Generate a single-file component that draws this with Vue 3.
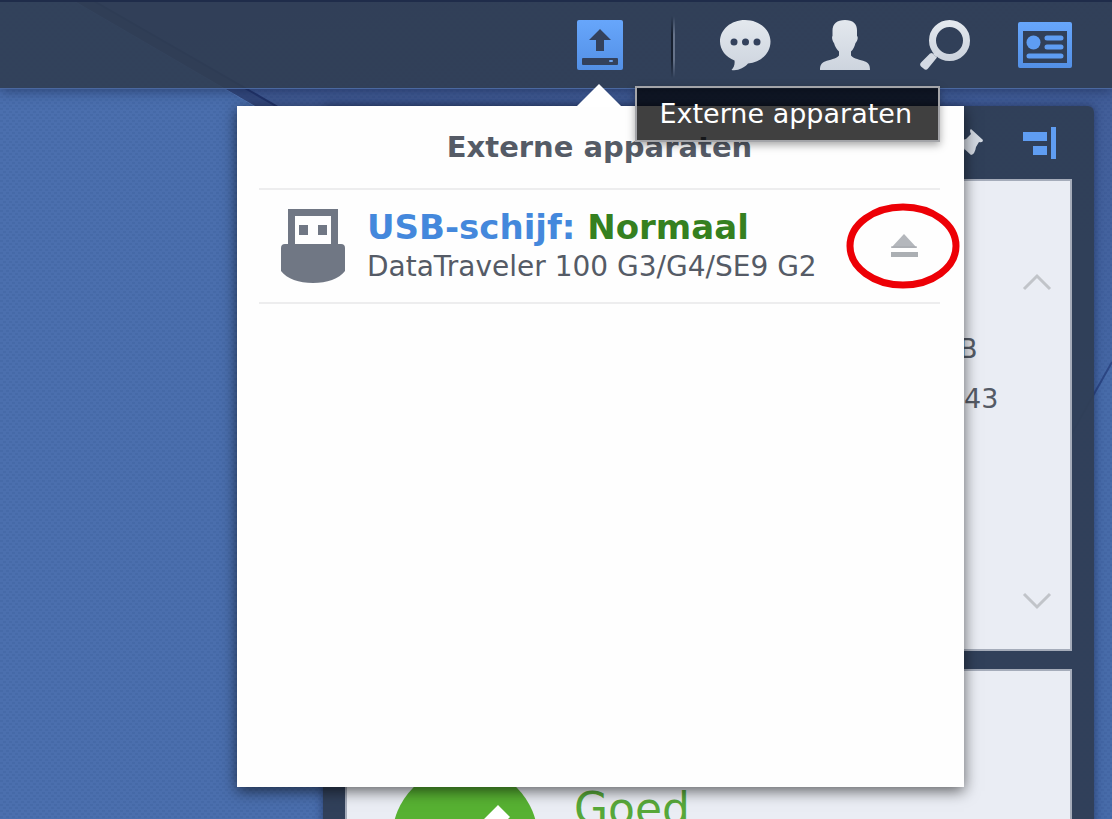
<script setup>
const device = {
  label: 'USB-schijf:',
  status: 'Normaal',
  model: 'DataTraveler 100 G3/G4/SE9 G2',
}
</script>

<template>
  <div class="desktop">
    <svg class="wallpaper" viewBox="0 0 1112 819" preserveAspectRatio="xMidYMid slice" aria-hidden="true">
      <defs>
        <linearGradient id="sky" x1="0" y1="0" x2="1" y2="0">
          <stop offset="0" stop-color="#4b6fae" />
          <stop offset="1" stop-color="#476ba9" />
        </linearGradient>
        <linearGradient id="facet" x1="0" y1="0" x2="0.3" y2="1">
          <stop offset="0" stop-color="#40578f" />
          <stop offset="1" stop-color="#4466a4" />
        </linearGradient>
        <pattern id="weave" width="6" height="6" patternUnits="userSpaceOnUse">
          <path d="M0 0h3v2H0zM3 3h3v2H3z" fill="#203c78" fill-opacity=".1" />
        </pattern>
      </defs>
      <rect width="1112" height="819" fill="url(#sky)" />
      <path d="M90 0H1112V362L1040 490L272 106Z" fill="url(#facet)" />
      <path d="M72 0H92L290 114L268 114Z" fill="#34497e" />
      <path d="M92 0L290 114" stroke="#22346b" stroke-width="2" />
      <path d="M72 0L268 114" stroke="#5679b8" stroke-width="1" />
      <path d="M1112 362L1040 490" stroke="#2c4684" stroke-width="2" />
      <rect width="1112" height="819" fill="url(#weave)" />
    </svg>

    <header class="taskbar">
      <button class="task" type="button" aria-label="Externe apparaten" aria-describedby="tip">
        <svg width="46" height="52" viewBox="0 0 46 52">
          <defs>
            <linearGradient id="blue" x1="0" y1="0" x2="0" y2="1">
              <stop offset="0" stop-color="#67a6fb" />
              <stop offset="1" stop-color="#5390e6" />
            </linearGradient>
          </defs>
          <rect x="0" y="1" width="46" height="50" rx="2" fill="url(#blue)" />
          <path d="M23 10L34 21H27V32H19V21H12Z" fill="#33415c" />
          <rect x="5" y="39" width="36" height="7" rx="1" fill="#33415c" />
          <rect x="32" y="41" width="4" height="2" rx="1" fill="#6aa2f0" />
        </svg>
      </button>
      <span class="divider"></span>
      <button class="task" type="button" aria-label="Chat">
        <svg width="52" height="52" viewBox="0 0 52 52">
          <defs>
            <linearGradient id="silver" x1="0" y1="0" x2="0" y2="1">
              <stop offset="0" stop-color="#e3e8ee" />
              <stop offset="1" stop-color="#cdd4de" />
            </linearGradient>
          </defs>
          <path d="M26 1C12 1 1 10.500 1 22.500C1 31 7 38 15.500 41.500C16 45 15 48.500 12.500 51C19 52 25 49 29 44.500C42 43.500 51.500 34 51.500 22.500C51.500 10.500 40 1 26 1Z" fill="url(#silver)" />
          <circle cx="15" cy="23" r="3.500" fill="#33415c" />
          <circle cx="26.500" cy="23" r="3.500" fill="#33415c" />
          <circle cx="38" cy="23" r="3.500" fill="#33415c" />
        </svg>
      </button>
      <button class="task" type="button" aria-label="Gebruiker">
        <svg width="50" height="52" viewBox="0 0 50 52">
          <path d="M25 1C17 1 12.500 5 12.500 11.500V17C11.500 18 12.500 22 14 24C15 28 17 30.500 19 32.500V36.500C16 40 10 40.500 5 42.500C1.500 44 0 46 0 51H50C50 46 48.500 44 45 42.500C40 40.500 34 40 31 36.500V32.500C33 30.500 34.500 28 35.500 24C37.500 22 38.500 18 37 17V11.500C37 5 33 1 25 1Z" fill="url(#silver)" />
        </svg>
      </button>
      <button class="task" type="button" aria-label="Zoeken">
        <svg width="50" height="52" viewBox="0 0 50 52">
          <circle cx="29.500" cy="21.500" r="17" fill="none" stroke="url(#silver)" stroke-width="7" />
          <path d="M12 34L17 38.500L8 49.500Q6 52 3.500 49.500L1 47.500Q-1 45 1.500 43L10 34.500Z" fill="#d4dae3" />
          <path d="M13 35L18 30.500L20.500 33L16.500 38Z" fill="#d4dae3" />
        </svg>
      </button>
      <button class="task" type="button" aria-label="Widgets">
        <svg width="54" height="52" viewBox="0 0 54 52">
          <path fill-rule="evenodd" d="M2 3H52Q54 3 54 5V47Q54 49 52 49H2Q0 49 0 47V5Q0 3 2 3ZM5 12V44H49V12Z" fill="url(#blue)" />
          <circle cx="15.500" cy="23.500" r="7" fill="#5e9df3" />
          <path d="M29 19H43M29 28H43M11 37H43" stroke="#5e9df3" stroke-width="5" stroke-linecap="round" />
        </svg>
      </button>
    </header>

    <aside class="widgets">
      <div class="widgets-bar">
        <button class="tool pin" type="button" aria-label="Vastmaken">
          <svg width="32" height="32" viewBox="0 0 32 32">
            <path d="M18 2L30 13Q30 16 26 15L23 20Q22 27 18 28L6 17Q7 13 13 12L18 7Q16 3 18 2Z" fill="#d3d9e2" />
            <path d="M11 22L3 30" stroke="#d3d9e2" stroke-width="2" />
          </svg>
        </button>
        <button class="tool" type="button" aria-label="Rechts uitlijnen">
          <svg width="34" height="34" viewBox="0 0 34 34">
            <path d="M0 6H24V15H0ZM10 20H24V29H10ZM28 1H33V33H28Z" fill="#5f9df2" />
          </svg>
        </button>
      </div>
      <section class="card first">
        <div class="readings">
          <span>B</span>
          <span class="clock">43</span>
        </div>
        <div class="scroller">
          <button type="button" aria-label="Omhoog">
            <svg width="30" height="20" viewBox="0 0 30 20"><path d="M2 17L15 4L28 17" fill="none" stroke="#c1c4c9" stroke-width="3" /></svg>
          </button>
          <button type="button" aria-label="Omlaag">
            <svg width="30" height="20" viewBox="0 0 30 20"><path d="M2 3L15 16L28 3" fill="none" stroke="#c1c4c9" stroke-width="3" /></svg>
          </button>
        </div>
      </section>
      <section class="card health">
        <svg width="146" height="146" viewBox="0 0 146 146" aria-hidden="true">
          <circle cx="73" cy="73" r="73" fill="#57b132" />
          <path d="M106 39L118 51L62 107L30 75L42 63L62 83Z" fill="#fff" />
        </svg>
        <strong>Goed</strong>
      </section>
    </aside>

    <main class="popup">
      <svg class="arrow" width="48" height="24" viewBox="0 0 48 24" aria-hidden="true"><path d="M24 1L47 24H1Z" fill="#fff" /></svg>
      <h1>Externe apparaten</h1>
      <div class="device">
        <svg class="usb" width="64" height="74" viewBox="0 0 64 74" aria-hidden="true">
          <path fill-rule="evenodd" d="M7 0H57V35H60Q64 35 64 39V62C58 70 46 74 32 74S6 70 0 62V39Q0 35 4 35H7ZM14 7V35H50V7Z" fill="#707784" />
          <path d="M18 16H27V26H18ZM37 16H46V26H37Z" fill="#707784" />
        </svg>
        <div class="info">
          <h2>{{ device.label }} <span>{{ device.status }}</span></h2>
          <p>{{ device.model }}</p>
        </div>
        <button class="eject" type="button" aria-label="Uitwerpen">
          <svg width="28" height="24" viewBox="0 0 28 24"><path d="M14 0L27 14H1Z" fill="#b4b7bc" /><path d="M1 13H27" stroke="#a2a5aa" stroke-width="1" /><rect x="1" y="18" width="27" height="5" fill="#abafb3" /></svg>
          <svg class="ring" width="114" height="86" viewBox="0 0 114 86"><ellipse cx="57" cy="43" rx="53" ry="39" fill="none" stroke="#ed0006" stroke-width="7" /></svg>
        </button>
      </div>
    </main>

    <div id="tip" class="tooltip" role="tooltip">Externe apparaten</div>
  </div>
</template>

<style>
body {
  margin: 0;
}
</style>

<style scoped>
.desktop {
  position: relative;
  height: 100vh;
  overflow: hidden;
  background: #476ba9;
  font-family: Verdana, "DejaVu Sans", sans-serif;
  color: #555b66;
}
.wallpaper {
  position: absolute;
  inset: 0;
  width: 100%;
  height: 100%;
}
button {
  padding: 0;
  border: 0;
  background: none;
  cursor: pointer;
}
svg {
  display: block;
}
.taskbar {
  position: relative;
  box-sizing: border-box;
  display: flex;
  justify-content: flex-end;
  height: 88px;
  padding: 0 17px;
  border-top: 2px solid #1f2c4a;
  background: rgba(48, 61, 82, 0.9);
  box-shadow: 0 1px 0 #4a68a0, 0 3px 12px rgba(20, 32, 70, 0.55);
}
.task {
  display: flex;
  justify-content: center;
  width: 100px;
  padding-top: 17px;
}
.divider {
  box-sizing: border-box;
  width: 4px;
  height: 62px;
  margin: 14px 20px 0 21px;
  background: linear-gradient(90deg, #17202f 0 50%, #66738a 50%);
  mask-image: linear-gradient(transparent, #000 30%, #000 70%, transparent);
}
.widgets {
  position: absolute;
  top: 106px;
  right: 18px;
  left: 323px;
  display: flex;
  flex-direction: column;
  gap: 18px;
  padding: 0 22px 22px;
  border-radius: 6px;
  background: rgba(48, 62, 86, 0.96);
  box-shadow: 0 0 10px rgba(20, 32, 66, 0.6);
}
.widgets-bar {
  display: flex;
  justify-content: flex-end;
  align-items: center;
  gap: 38px;
  height: 73px;
  margin-bottom: -18px;
  padding-right: 15px;
}
.card {
  box-sizing: border-box;
  border: 2px solid #a5acba;
  background: #eaedf4;
}
.first {
  display: flex;
  justify-content: flex-end;
  height: 472px;
}
.readings {
  display: flex;
  flex-direction: column;
  width: 63px;
  padding-top: 143px;
  font-size: 27px;
  line-height: 50px;
}
.clock {
  padding-left: 5px;
}
.scroller {
  display: flex;
  flex-direction: column;
  justify-content: space-between;
  padding: 91px 18px 38px 0;
}
.health {
  display: flex;
  gap: 36px;
  padding: 95px 45px;
  color: #57a83a;
}
.health strong {
  font-size: 44px;
  font-weight: 400;
  line-height: 86px;
}
.popup {
  position: absolute;
  top: 106px;
  right: 148px;
  left: 237px;
  box-sizing: border-box;
  min-height: 681px;
  padding: 0 24px 0 22px;
  background: #fefefe;
  box-shadow: 0 4px 14px rgba(0, 0, 0, 0.6);
}
.arrow {
  position: absolute;
  top: -23px;
  right: 341px;
}
h1,
h2,
p {
  margin: 0;
}
h1 {
  padding: 22px 0;
  border-bottom: 2px solid #ededee;
  font-size: 29px;
  line-height: 38px;
  text-align: center;
}
.device {
  display: flex;
  align-items: center;
  gap: 22px;
  height: 112px;
  padding: 0 22px;
  border-bottom: 2px solid #ededee;
}
.info {
  flex: 1;
  white-space: nowrap;
}
h2 {
  color: #4488dc;
  font-size: 34px;
  line-height: 42px;
}
h2 span {
  color: #358020;
}
p {
  font-size: 28px;
  line-height: 38px;
}
.eject {
  position: relative;
}
.ring {
  position: absolute;
  top: -31px;
  left: -44px;
}
.tooltip {
  position: absolute;
  top: 86px;
  right: 172px;
  box-sizing: border-box;
  padding: 0 26px 0 23px;
  border: 2px solid #a3a4a8;
  background: rgba(0, 0, 0, 0.75);
  box-shadow: 0 3px 8px rgba(0, 0, 0, 0.35);
  color: #fff;
  font-size: 27px;
  line-height: 52px;
}
</style>
